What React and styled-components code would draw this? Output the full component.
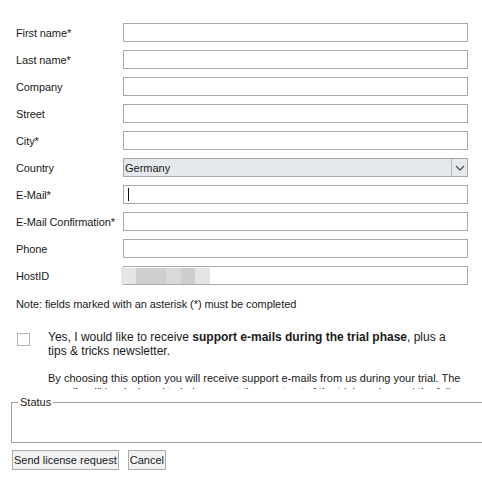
import React from 'react'
import styled, { createGlobalStyle } from 'styled-components';

const Global = createGlobalStyle`
  html, body { margin: 0; padding: 0; background: #fff; }
  body { font-family: "Liberation Sans", Arial, sans-serif; color: #1a1a1a; width: 482px; height: 480px; overflow: hidden; }
`;

const Page = styled.div`
  width: 482px;
  height: 480px;
  overflow: hidden;
`;

const ScrollArea = styled.div`
  height: 389px;
  overflow: hidden;
  padding: 23px 0 0 16px;
  box-sizing: border-box;
`;

const Row = styled.div`
  display: grid;
  grid-template-columns: 107px 345px;
  align-items: center;
  height: 19px;
  margin-bottom: 8px;
`;

const Label = styled.label`
  font-size: 11px;
  line-height: 13px;
  letter-spacing: -0.1px;
  padding-top: 1px;
`;

const Field = styled.div`
  position: relative;
  height: 19px;
  box-sizing: border-box;
  border: 1px solid #a9a9a9;
  background: ${({ $grey }) => ($grey ? '#e5e8ec' : '#fff')};
  display: flex;
  align-items: center;
  font-size: 11px;
`;

const SelectText = styled.span`
  flex: 1;
  padding-left: 1px;
  font-size: 11px;
`;

const Arrow = styled.span`
  width: 15px;
  height: 17px;
  border-left: 1px solid #b8b8b8;
  display: flex;
  align-items: center;
  justify-content: center;
`;

const Caret = styled.span`
  position: absolute;
  left: 4px;
  top: 2px;
  width: 1px;
  height: 13px;
  background: #111;
`;

const Redacted = styled.div`
  position: absolute;
  left: -3px;
  top: 1px;
  height: 16px;
  display: flex;
`;

const Blur = styled.span`
  width: ${({ $w }) => $w}px;
  background: ${({ $c }) => $c};
`;

const Note = styled.p`
  margin: 13px 0 0 0;
  font-size: 11px;
  line-height: 13px;
  letter-spacing: -0.07px;
`;

const OptIn = styled.div`
  display: flex;
  margin-top: 19px;
`;

const Check = styled.span`
  flex: none;
  width: 13px;
  height: 13px;
  box-sizing: border-box;
  border: 1px solid #b5b5b5;
  background: #fff;
  margin: 3px 0 0 1px;
`;

const OptText = styled.div`
  margin-left: 18px;
  width: 415px;
  b { font-weight: bold; }
`;

const Para = styled.p`
  margin: 0 0 13px 0;
  font-size: ${({ $small }) => ($small ? '11px' : '12px')};
  line-height: 14px;
`;

const Status = styled.fieldset`
  margin: 7px 0 0 11px;
  width: 500px;
  height: 47px;
  box-sizing: border-box;
  border: 1px solid #a0a0a0;
  padding: 0;
  legend {
    font-size: 11px;
    margin-left: 6px;
    padding: 0 2px;
  }
`;

const Buttons = styled.div`
  display: flex;
  gap: 9px;
  margin: 7px 0 0 12px;
`;

const Button = styled.button`
  font-family: "Liberation Sans", Arial, sans-serif;
  font-size: 11px;
  height: 20px;
  padding: 0 1px;
  background: #f0f2f4;
  border: 1px solid #adadad;
  border-radius: 0;
  color: #1a1a1a;
`;

const fields = [
  'First name*', 'Last name*', 'Company', 'Street', 'City*', 'Country',
  'E-Mail*', 'E-Mail Confirmation*', 'Phone', 'HostID',
];

function Input({ name }) {
  if (name === 'Country') {
    return (
      <Field $grey>
        <SelectText>Germany</SelectText>
        <Arrow>
          <svg width="10" height="6" viewBox="0 0 10 6">
            <path d="M1 1 L5 5 L9 1" fill="none" stroke="#555" strokeWidth="1.4" />
          </svg>
        </Arrow>
      </Field>
    );
  }
  if (name === 'E-Mail*') {
    return <Field><Caret /></Field>;
  }
  if (name === 'HostID') {
    return (
      <Field>
        <Redacted>
          <Blur $w={15} $c="#e6e6e6" />
          <Blur $w={30} $c="#cfcfcf" />
          <Blur $w={15} $c="#d9d9d9" />
          <Blur $w={14} $c="#cdcdcd" />
          <Blur $w={15} $c="#e4e4e4" />
        </Redacted>
      </Field>
    );
  }
  return <Field />;
}

export default function App() {
  return (
    <Page>
      <Global />
      <ScrollArea>
        {fields.map((name) => (
          <Row key={name}>
            <Label>{name}</Label>
            <Input name={name} />
          </Row>
        ))}
        <Note>Note: fields marked with an asterisk (*) must be completed</Note>
        <OptIn>
          <Check />
          <OptText>
            <Para>Yes, I would like to receive <b>support e-mails during the trial phase</b>, plus a tips &amp; tricks newsletter.</Para>
            <Para $small>By choosing this option you will receive support e-mails from us during your trial. The e-mails will be designed to help you get the most out of the trial version and the full product.</Para>
          </OptText>
        </OptIn>
      </ScrollArea>
      <Status>
        <legend>Status</legend>
      </Status>
      <Buttons>
        <Button>Send license request</Button>
        <Button>Cancel</Button>
      </Buttons>
    </Page>
  )
}
